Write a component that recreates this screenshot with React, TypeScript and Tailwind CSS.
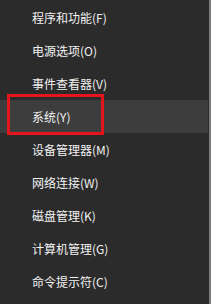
const items = [
  "程序和功能(F)",
  "电源选项(O)",
  "事件查看器(V)",
  "系统(Y)",
  "设备管理器(M)",
  "网络连接(W)",
  "磁盘管理(K)",
  "计算机管理(G)",
  "命令提示符(C)",
];

export default function App() {
  return (
    <div
      className="relative w-[211px] h-[304px] bg-[#2b2b2b] border-r-2 border-[#7b7b7b] overflow-hidden"
      style={{ fontFamily: '"Microsoft YaHei", "Noto Sans CJK SC", sans-serif' }}
    >
      <ul className="pt-px pr-px">
        {items.map((label, i) => (
          <li
            key={label}
            className={`h-[33px] flex items-center pl-[32px] text-[12px] text-[#f2f2f2] ${i === 3 ? "bg-[#3d3d3d]" : ""}`}
          >
            {label}
          </li>
        ))}
      </ul>
      {/* red highlight box */}
      <div className="absolute left-[7px] top-[94px] w-[97px] h-[41px] border-[3px] border-[#e8141c]" />
    </div>
  );
}
